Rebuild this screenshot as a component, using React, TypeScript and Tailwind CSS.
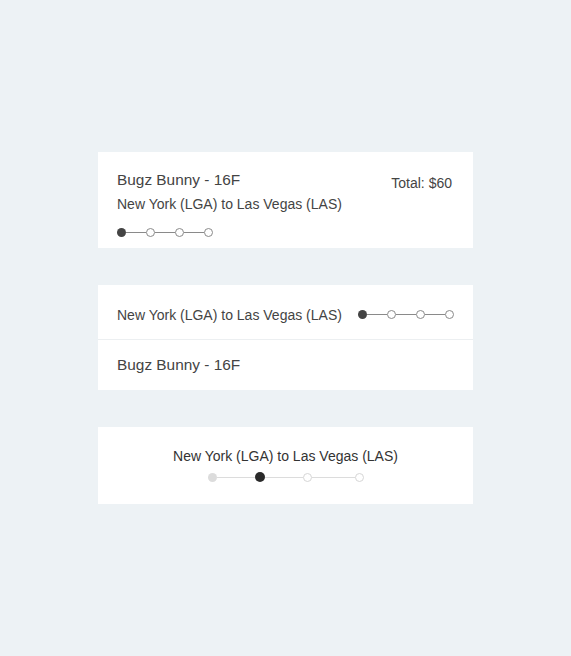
import React from 'react';

const font = { fontFamily: '"Liberation Sans", Arial, sans-serif' };

const SmallStepper: React.FC<{ active: number }> = ({ active }) => (
  <div className="flex items-center">
    {[0, 1, 2, 3].map((i) => (
      <React.Fragment key={i}>
        {i > 0 && <div className="h-px w-[20px] bg-[#8a8a8a]" />}
        <div
          className={
            i === active
              ? 'h-[9px] w-[9px] rounded-full bg-[#444]'
              : 'h-[9px] w-[9px] rounded-full border border-[#8a8a8a] bg-white'
          }
        />
      </React.Fragment>
    ))}
  </div>
);

const WideStepper: React.FC = () => (
  <div className="flex items-center justify-center">
    <div className="h-[9px] w-[9px] rounded-full bg-[#dcdcdc]" />
    <div className="h-px w-[38px] bg-[#dcdcdc]" />
    <div className="h-[10px] w-[10px] rounded-full bg-[#2a2a2a]" />
    <div className="h-px w-[38px] bg-[#dcdcdc]" />
    <div className="h-[9px] w-[9px] rounded-full border border-[#d6d6d6] bg-white" />
    <div className="h-px w-[43px] bg-[#dcdcdc]" />
    <div className="h-[9px] w-[9px] rounded-full border border-[#d6d6d6] bg-white" />
  </div>
);

export default function App() {
  return (
    <div className="min-h-[656px] bg-[#edf2f5] pt-[152px] text-[#444]" style={font}>
      <div className="mx-auto flex w-[375px] flex-col gap-[37px]">
        {/* Card: summary */}
        <div className="bg-white pl-[19px] pr-[21px] pt-[18px] pb-[11px]">
          <div className="flex items-start justify-between">
            <div>
              <p className="text-[15.4px] leading-[20px]">Bugz Bunny - 16F</p>
              <p className="mt-[4px] text-[14px] leading-[20px]">New York (LGA) to Las Vegas (LAS)</p>
            </div>
            <p className="mt-[3px] text-[14px] leading-[20px]">Total: $60</p>
          </div>
          <div className="mt-[14px]">
            <SmallStepper active={0} />
          </div>
        </div>

        {/* Card: rows */}
        <div className="bg-white">
          <div className="flex h-[55px] items-center justify-between border-b border-[#eceff1] pl-[19px] pr-[19px] pt-[5px]">
            <p className="text-[14px] leading-[20px]">New York (LGA) to Las Vegas (LAS)</p>
            <SmallStepper active={0} />
          </div>
          <div className="flex h-[50px] items-center pl-[19px]">
            <p className="text-[15.4px] leading-[20px]">Bugz Bunny - 16F</p>
          </div>
        </div>

        {/* Card: centered */}
        <div className="bg-white pt-[19px] pb-[22px]">
          <p className="text-center text-[14px] leading-[20px] text-[#333]">New York (LGA) to Las Vegas (LAS)</p>
          <div className="mt-[6px]">
            <WideStepper />
          </div>
        </div>
      </div>
    </div>
  );
}
